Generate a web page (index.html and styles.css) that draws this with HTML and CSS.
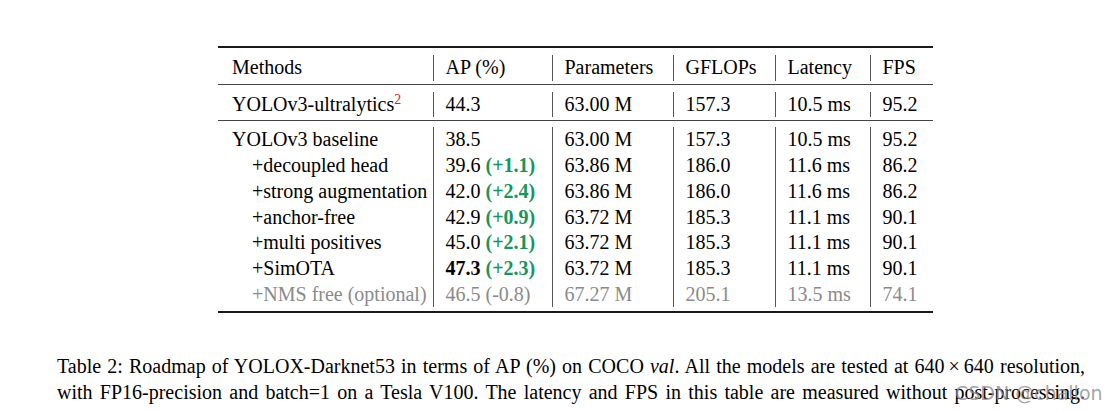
FILE: index.html
```html
<!DOCTYPE html>
<html>
<head>
<meta charset="utf-8">
<link rel="stylesheet" href="styles.css">
</head>
<body>
<div class="page">
  <table class="roadmap">
    <colgroup>
      <col class="c1"><col class="c2"><col class="c3"><col class="c4"><col class="c5"><col class="c6">
    </colgroup>
    <tr class="rule"><td colspan="6"><div class="gap-top thick"></div></td></tr>
    <tr class="row">
      <td>Methods</td><td>AP (%)</td><td>Parameters</td><td>GFLOPs</td><td>Latency</td><td>FPS</td>
    </tr>
    <tr class="rule"><td colspan="6"><div class="mid mid-a"></div></td></tr>
    <tr class="row">
      <td>YOLOv3-ultralytics<sup class="ref">2</sup></td><td>44.3</td><td>63.00 M</td><td>157.3</td><td>10.5 ms</td><td>95.2</td>
    </tr>
    <tr class="rule"><td colspan="6"><div class="mid mid-b"></div></td></tr>
    <tr class="row">
      <td>YOLOv3 baseline</td><td>38.5</td><td>63.00 M</td><td>157.3</td><td>10.5 ms</td><td>95.2</td>
    </tr>
    <tr class="row">
      <td class="sub">+decoupled head</td><td>39.6 <b class="gain">(+1.1)</b></td><td>63.86 M</td><td>186.0</td><td>11.6 ms</td><td>86.2</td>
    </tr>
    <tr class="row">
      <td class="sub">+strong augmentation</td><td>42.0 <b class="gain">(+2.4)</b></td><td>63.86 M</td><td>186.0</td><td>11.6 ms</td><td>86.2</td>
    </tr>
    <tr class="row">
      <td class="sub">+anchor-free</td><td>42.9 <b class="gain">(+0.9)</b></td><td>63.72 M</td><td>185.3</td><td>11.1 ms</td><td>90.1</td>
    </tr>
    <tr class="row">
      <td class="sub">+multi positives</td><td>45.0 <b class="gain">(+2.1)</b></td><td>63.72 M</td><td>185.3</td><td>11.1 ms</td><td>90.1</td>
    </tr>
    <tr class="row">
      <td class="sub">+SimOTA</td><td><b>47.3</b> <b class="gain">(+2.3)</b></td><td>63.72 M</td><td>185.3</td><td>11.1 ms</td><td>90.1</td>
    </tr>
    <tr class="row muted">
      <td class="sub">+NMS free (optional)</td><td>46.5 (-0.8)</td><td>67.27 M</td><td>205.1</td><td>13.5 ms</td><td>74.1</td>
    </tr>
    <tr class="rule"><td colspan="6"><div class="bottom thick"></div></td></tr>
  </table>

  <p class="caption">
    <span class="line">Table 2: Roadmap of YOLOX-Darknet53 in terms of AP (%) on COCO <i>val</i>. All the models are tested at 640&thinsp;×&thinsp;640 resolution,</span>
    <span class="line">with FP16-precision and batch=1 on a Tesla V100. The latency and FPS in this table are measured without post-processing.</span>
  </p>
  <div class="watermark">CSDN @challon</div>
</div>
</body>
</html>
```

FILE: styles.css
```css
html, body {
  margin: 0;
  padding: 0;
  background: #ffffff;
}

.page {
  position: relative;
  width: 1104px;
  height: 411px;
  overflow: hidden;
  font-family: "Liberation Serif", "Times New Roman", serif;
  color: #000;
}

.roadmap {
  margin: 46px 0 0 218px;
  width: 715px;
  border-collapse: collapse;
  border-spacing: 0;
  table-layout: fixed;
  font-size: 20px;
}

.c1 { width: 215px; }
.c2 { width: 119px; }
.c3 { width: 121px; }
.c4 { width: 102px; }
.c5 { width: 95px; }
.c6 { width: 63px; }

.roadmap td {
  padding: 0;
  white-space: nowrap;
}

.row td {
  height: 25.7px;
  line-height: 25.7px;
  padding-left: 12px;
  border-left: 1px solid #555;
}

.row td:first-child {
  padding-left: 14px;
  border-left: none;
}

.row td.sub {
  padding-left: 34px;
}

.rule td {
  padding: 0;
}

.thick {
  height: 2px;
  background: #1a1a1a;
}

.gap-top {
  margin-bottom: 7px;
}

.mid {
  height: 1px;
  background: #444;
}

.mid-a {
  margin: 3px 0 7px;
}

.mid-b {
  margin: 3px 0 6px;
}

.bottom {
  margin-top: 4px;
}

.ref {
  color: #e8141b;
  font-size: 14px;
  line-height: 0;
  vertical-align: 7px;
}

.gain {
  color: #16965a;
  font-weight: bold;
}

.muted td {
  color: #8a8a8a;
}

.caption {
  margin: 40px 0 0 57px;
  width: 1028px;
  font-size: 20px;
  line-height: 26px;
}

.caption .line {
  display: block;
  text-align: justify;
  text-align-last: justify;
}

.watermark {
  position: absolute;
  left: 955px;
  top: 382px;
  font-family: "DejaVu Sans", "Noto Sans", sans-serif;
  font-size: 19px;
  color: rgba(140, 140, 140, 0.8);
  white-space: nowrap;
}
```
